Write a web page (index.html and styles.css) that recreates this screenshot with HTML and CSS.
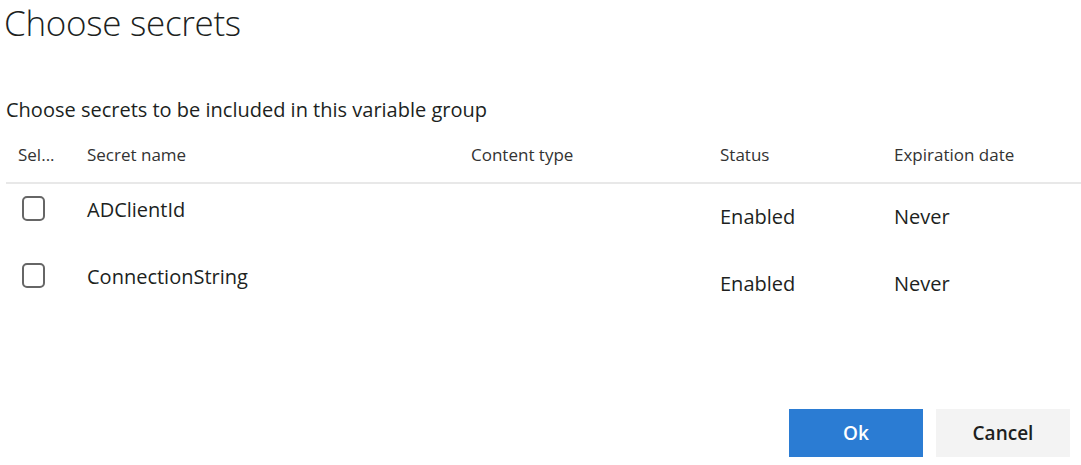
FILE: index.html
```html
<!DOCTYPE html>
<html>
<head>
<meta charset="utf-8">
<link rel="stylesheet" href="styles.css">
</head>
<body>
<div class="dialog">
  <h1 class="title">Choose secrets</h1>
  <p class="subtitle">Choose secrets to be included in this variable group</p>
  <div class="table">
    <div class="row head">
      <div class="c sel">Sel...</div>
      <div class="c name">Secret name</div>
      <div class="c ctype">Content type</div>
      <div class="c status">Status</div>
      <div class="c exp">Expiration date</div>
    </div>
    <div class="row item">
      <div class="c sel"><span class="check"></span></div>
      <div class="c name">ADClientId</div>
      <div class="c ctype"></div>
      <div class="c status low">Enabled</div>
      <div class="c exp low">Never</div>
    </div>
    <div class="row item">
      <div class="c sel"><span class="check"></span></div>
      <div class="c name">ConnectionString</div>
      <div class="c ctype"></div>
      <div class="c status low">Enabled</div>
      <div class="c exp low">Never</div>
    </div>
  </div>
  <div class="actions">
    <button class="btn primary">Ok</button>
    <button class="btn">Cancel</button>
  </div>
</div>
</body>
</html>
```
FILE: styles.css
```css
html, body {
  margin: 0;
  padding: 0;
  background: #fff;
}
body {
  font-family: "Open Sans", "Noto Sans", sans-serif;
  color: #201f1e;
}
.dialog {
  width: 1081px;
  height: 465px;
  display: flex;
  flex-direction: column;
}
.title {
  margin: 0;
  padding: 0 0 0 4px;
  font-size: 35px;
  font-weight: 300;
  line-height: 46px;
  color: #201f1e;
  letter-spacing: -0.3px;
}
.subtitle {
  margin: 51px 0 0 6px;
  font-size: 20px;
  line-height: 26px;
}
.table {
  margin-left: 6px;
  margin-top: 4px;
}
.row {
  display: flex;
}
.head {
  height: 55px;
  align-items: center;
  border-bottom: 2px solid #e8e8e8;
  font-size: 17px;
  color: #333;
}
.c.sel { width: 81px; padding-left: 12px; box-sizing: border-box; }
.c.name { width: 384px; }
.c.ctype { width: 249px; }
.c.status { width: 174px; }
.c.exp { flex: 1; }
.item {
  height: 67px;
  font-size: 20px;
  line-height: 27px;
}
.item .c { padding-top: 12px; }
.item .c.sel { padding-top: 12px; padding-left: 16px; }
.item .c.low { padding-top: 19px; }
.check {
  display: block;
  width: 19px;
  height: 21px;
  border: 2px solid #666;
  border-radius: 5px;
}
.actions {
  margin-top: auto;
  display: flex;
  justify-content: flex-end;
  gap: 13px;
  padding: 0 11px 8px 0;
}
.btn {
  width: 134px;
  height: 48px;
  border: none;
  background: #f3f3f3;
  font-family: inherit;
  font-size: 19px;
  font-weight: 600;
  color: #201f1e;
  padding: 0;
}
.btn.primary {
  background: #2b7cd3;
  color: #fff;
}
```
